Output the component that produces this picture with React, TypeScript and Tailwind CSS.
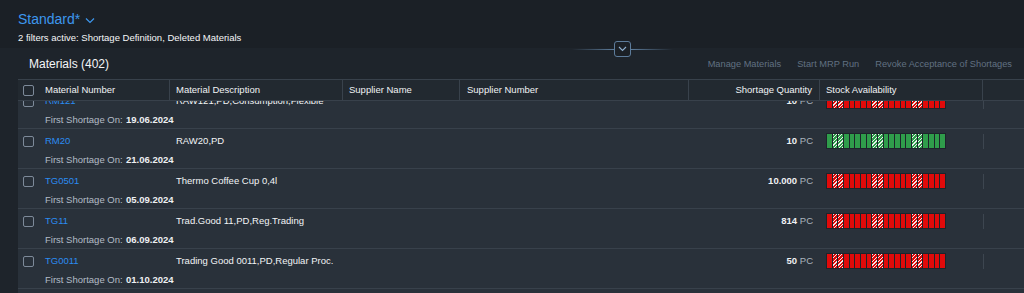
import React from "react";

type Row = {
  id: string;
  desc: string;
  qty: string;
  date: string;
  ok: boolean;
};

const rows: Row[] = [
  { id: "RM121", desc: "RAW121,PD,Consumption,Flexible", qty: "10", date: "19.06.2024", ok: false },
  { id: "RM20", desc: "RAW20,PD", qty: "10", date: "21.06.2024", ok: true },
  { id: "TG0501", desc: "Thermo Coffee Cup 0,4l", qty: "10.000", date: "05.09.2024", ok: false },
  { id: "TG11", desc: "Trad.Good 11,PD,Reg.Trading", qty: "814", date: "06.09.2024", ok: false },
  { id: "TG0011", desc: "Trading Good 0011,PD,Regular Proc.", qty: "50", date: "01.10.2024", ok: false },
  { id: "TG0012", desc: "Trading Good 0012,PD,Regular Proc.", qty: "20", date: "02.10.2024", ok: false },
];

// which of the 21 segments are hatched
const hatched = [1, 2, 8, 9, 15, 16];

const cols = "grid grid-cols-[21px_131px_173px_117px_229px_131px_163px_1fr]";

function Checkbox() {
  return <div className="w-[11px] h-[11px] rounded-[2px] border border-[#7d8a99]" />;
}

function StockBar({ ok }: { ok: boolean }) {
  return (
    <div className="flex w-[120px] h-[16px] gap-[1px] p-[1px] bg-[#1d242b]">
      {Array.from({ length: 21 }).map((_, i) => {
        const h = hatched.includes(i);
        let cls = "flex-1 ";
        if (ok) {
          cls += h
            ? "bg-[repeating-linear-gradient(135deg,#e8f3ea_0px,#e8f3ea_1px,#2f9d4b_1px,#2f9d4b_2.5px)]"
            : "bg-[#2f9d4b]";
        } else {
          cls += h
            ? "bg-[repeating-linear-gradient(135deg,#f6e6e6_0px,#f6e6e6_1px,#e10a0a_1px,#e10a0a_2.5px)]"
            : "bg-[#e10a0a]";
        }
        return <div key={i} className={cls} />;
      })}
    </div>
  );
}

function TableRow({ r }: { r: Row }) {
  return (
    <div className="h-[40px] border-b border-[#38414b] flex flex-col">
      <div className={`${cols} h-[24px] items-center`}>
        <div className="pl-[5px]">
          <Checkbox />
        </div>
        <div className="pl-[6px] text-[#2b8cf2]">{r.id}</div>
        <div className="pl-[6px] text-[#f2f4f6] whitespace-nowrap">{r.desc}</div>
        <div />
        <div />
        <div className="pr-[7px] text-right whitespace-nowrap">
          <span className="font-bold text-[#eef0f2]">{r.qty}</span>
          <span className="text-[#aab4bf]"> PC</span>
        </div>
        <div className="pl-[6px]">
          <StockBar ok={r.ok} />
        </div>
        <div className="h-[15px] w-px bg-[#3d4650]" />
      </div>
      <div className="h-[14px] flex items-center pl-[27px] whitespace-nowrap">
        <span className="text-[#b3bcc6] w-[81px] shrink-0">First Shortage On:</span>
        <span className="text-[#eef0f2] font-bold">{r.date}</span>
      </div>
    </div>
  );
}

export default function App() {
  return (
    <div className="w-[1024px] h-[293px] overflow-hidden bg-[#1e242b] text-[9.5px] font-['Liberation_Sans',Arial,sans-serif]">
      {/* page header */}
      <div className="relative h-[48px] bg-[#1b2026] pl-[18px] pt-[9px]">
        <div className="flex items-center gap-[5px] h-[20px]">
          <span className="text-[14px] text-[#3d97ee]">Standard*</span>
          <svg width="10" height="7" viewBox="0 0 10 7" className="mt-[2px]">
            <path d="M1 1.5 L5 5.5 L9 1.5" fill="none" stroke="#3d97ee" strokeWidth="1.2" />
          </svg>
        </div>
        <div className="mt-[2px] text-[9.5px] text-[#f5f6f8]">
          2 filters active: Shortage Definition, Deleted Materials
        </div>
        <div className="absolute left-[572px] top-[41px] flex items-center">
          <div className="w-[42px] h-px bg-[linear-gradient(to_right,transparent,#5d7c9b)]" />
          <div className="w-[17px] h-[16px] rounded-[3px] border border-[#5d7c9b] bg-[#1b2026] flex items-center justify-center">
            <svg width="9" height="6" viewBox="0 0 9 6">
              <path d="M1 1 L4.5 4.5 L8 1" fill="none" stroke="#8fb0d0" strokeWidth="1.1" />
            </svg>
          </div>
          <div className="w-[42px] h-px bg-[linear-gradient(to_left,transparent,#5d7c9b)]" />
        </div>
      </div>

      {/* table toolbar */}
      <div className="ml-[18px] h-[31px] flex items-center justify-between pl-[11px] pr-[12px]">
        <span className="text-[12px] text-[#f3f5f7]">Materials (402)</span>
        <div className="flex items-center gap-[16px] text-[9.25px] text-[#617182] pt-[2px]">
          <span>Manage Materials</span>
          <span>Start MRP Run</span>
          <span>Revoke Acceptance of Shortages</span>
        </div>
      </div>

      {/* table */}
      <div className="ml-[18px] bg-[#29313a]">
        <div className={`${cols} h-[22px] items-center bg-[#222930] border-t border-b border-[#38414b] text-[#f0f2f4]`}>
          <div className="pl-[5px]">
            <Checkbox />
          </div>
          <div className="pl-[6px] h-full flex items-center border-r border-[#39424c]">Material Number</div>
          <div className="pl-[6px] h-full flex items-center border-r border-[#39424c]">Material Description</div>
          <div className="pl-[6px] h-full flex items-center border-r border-[#39424c]">Supplier Name</div>
          <div className="pl-[7px] h-full flex items-center border-r border-[#39424c]">Supplier Number</div>
          <div className="pr-[7px] h-full flex items-center justify-end border-r border-[#39424c]">Shortage Quantity</div>
          <div className="pl-[6px] h-full flex items-center border-r border-[#39424c]">Stock Availability</div>
          <div />
        </div>
        <div className="h-[200px] overflow-hidden">
          <div className="-mt-[12px]">
            {rows.map((r) => (
              <TableRow key={r.id} r={r} />
            ))}
          </div>
        </div>
      </div>
    </div>
  );
}
